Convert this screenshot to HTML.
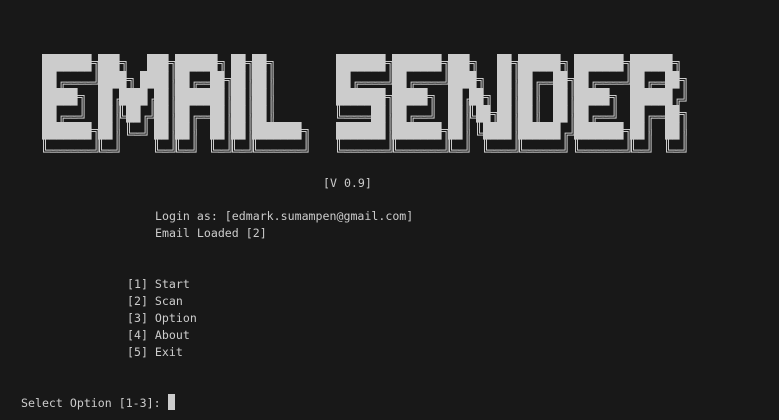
<!DOCTYPE html>
<html><head><style>
html,body{margin:0;padding:0;background:#181818;width:779px;height:420px;overflow:hidden}
.t{position:absolute;font-family:"DejaVu Sans Mono","Liberation Mono",monospace;font-size:11.6px;line-height:17px;color:#cccccc;white-space:pre}
svg{position:absolute;left:0;top:0}
</style></head><body>
<svg width="779" height="170" viewBox="0 0 779 170">
<defs>
<filter id="ring" x="-10%" y="-10%" width="120%" height="130%">
<feMorphology in="SourceAlpha" operator="dilate" radius="1" result="a"/>
<feComposite in="a" in2="SourceAlpha" operator="out" result="r1"/>
<feMorphology in="SourceAlpha" operator="dilate" radius="3" result="c"/>
<feMorphology in="SourceAlpha" operator="dilate" radius="2" result="d"/>
<feComposite in="c" in2="d" operator="out" result="r2"/>
<feMerge result="m"><feMergeNode in="r1"/><feMergeNode in="r2"/></feMerge>
<feFlood flood-color="#cccccc"/>
<feComposite in2="m" operator="in"/>
</filter>
</defs>
<g id="shadow" filter="url(#ring)"><g id="sh" transform="translate(4,10)"></g></g>
<g id="main" fill="#cccccc"></g>
</svg>
<script>
var L=[
[0,["1111111","11.....","11111..","11.....","1111111"]],
[8,["111....111","1111..1111","11.1111.11","11..11..11","11......11"]],
[19,["111111.","11...11","1111111","11...11","11...11"]],
[27,["11","11","11","11","11"]],
[30,["11.....","11.....","11.....","11.....","1111111"]],
[42,["1111111","11.....","1111111",".....11","1111111"]],
[50,["1111111","11.....","11111..","11.....","1111111"]],
[58,["111....11","1111...11","11.11..11","11..11.11","11...1111"]],
[68,["111111.","11...11","11...11","11...11","111111."]],
[76,["1111111","11.....","11111..","11.....","1111111"]],
[84,["111111.","11...11","111111.","11...11","11...11"]]
];
var ns="http://www.w3.org/2000/svg",m=document.getElementById("main"),s=document.getElementById("sh");
L.forEach(function(l){l[1].forEach(function(row,r){for(var c=0;c<row.length;c++)if(row[c]=="1"){
[m,s].forEach(function(g){var e=document.createElementNS(ns,"rect");e.setAttribute("x",42+(l[0]+c)*7);e.setAttribute("y",54+r*17);e.setAttribute("width",7.6);e.setAttribute("height",17.6);e.setAttribute("fill","#ccc");g.appendChild(e);});}});});
</script>
<div class="t" style="left:323px;top:175px">[V 0.9]</div>
<div class="t" style="left:155px;top:208px">Login as: [edmark.sumampen@gmail.com]
Email Loaded [2]</div>
<div class="t" style="left:127px;top:276px">[1] Start
[2] Scan
[3] Option
[4] About
[5] Exit</div>
<div class="t" style="left:21px;top:395px">Select Option [1-3]: </div>
<div style="position:absolute;left:168px;top:394px;width:7px;height:16px;background:#cccccc"></div>
</body></html>
